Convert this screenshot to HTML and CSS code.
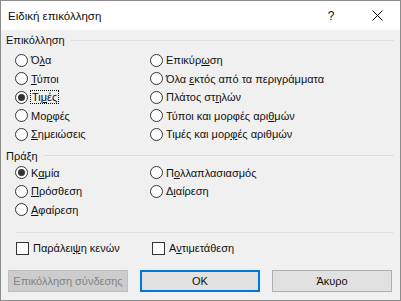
FILE: index.html
```html
<!DOCTYPE html>
<html lang="el">
<head>
    <meta charset="UTF-8">
    <title>Ειδική επικόλληση</title>
    <link rel="stylesheet" href="styles.css">
</head>
<body>
    <div class="dialog">
        <div class="titlebar">
            <span class="title">Ειδική επικόλληση</span>
            <span class="help">?</span>
            <span class="close">
                <svg width="11" height="11" viewBox="0 0 11 11"><path d="M0.5 0.5 L10.5 10.5 M10.5 0.5 L0.5 10.5" stroke="#000" stroke-width="1" fill="none"/></svg>
            </span>
        </div>

        <div class="content">
            <div class="group-head group-paste"><span>Επικόλληση</span></div>
            <div class="options options-paste">
                <label class="opt"><span class="radio"></span><span>Ό<u>λ</u>α</span></label>
                <label class="opt"><span class="radio"></span><span>Επικύρ<u>ω</u>ση</span></label>
                <label class="opt"><span class="radio"></span><span><u>Τ</u>ύποι</span></label>
                <label class="opt"><span class="radio"></span><span>Όλα <u>ε</u>κτός από τα περιγράμματα</span></label>
                <label class="opt"><span class="radio checked"></span><span class="focus">Τι<u>μ</u>ές</span></label>
                <label class="opt"><span class="radio"></span><span>Πλάτος στ<u>η</u>λών</span></label>
                <label class="opt"><span class="radio"></span><span>Μο<u>ρ</u>φές</span></label>
                <label class="opt"><span class="radio"></span><span>Τύποι και μορφές αρι<u>θ</u>μών</span></label>
                <label class="opt"><span class="radio"></span><span><u>Σ</u>ημειώσεις</span></label>
                <label class="opt"><span class="radio"></span><span>Τιμές και μορ<u>φ</u>ές αριθμών</span></label>
            </div>

            <div class="group-head group-op"><span>Πράξη</span></div>
            <div class="options options-op">
                <label class="opt"><span class="radio checked"></span><span>Κ<u>α</u>μία</span></label>
                <label class="opt"><span class="radio"></span><span>Π<u>ο</u>λλαπλασιασμός</span></label>
                <label class="opt"><span class="radio"></span><span><u>Π</u>ρόσθεση</span></label>
                <label class="opt"><span class="radio"></span><span>Δ<u>ι</u>αίρεση</span></label>
                <label class="opt"><span class="radio"></span><span><u>Α</u>φαίρεση</span></label>
            </div>

            <div class="separator"></div>

            <div class="options options-check">
                <label class="opt"><span class="check"></span><span>Παράλει<u>ψ</u>η κενών</span></label>
                <label class="opt"><span class="check"></span><span>Α<u>ν</u>τιμετάθεση</span></label>
            </div>

            <div class="buttons">
                <button class="btn" disabled>Επικόλληση σύνδεσης</button>
                <button class="btn btn-default">OK</button>
                <button class="btn">Άκυρο</button>
            </div>
        </div>
    </div>
</body>
</html>
```

FILE: styles.css
```css
* {
    margin: 0;
    padding: 0;
    box-sizing: border-box;
}

body {
    font-family: 'Liberation Sans', Arial, sans-serif;
    font-size: 11px;
    color: #111;
    background: #f0f0f0;
}

.dialog {
    width: 401px;
    height: 301px;
    border: 1px solid #8c8c8c;
    background: #f0f0f0;
    display: flex;
    flex-direction: column;
}

.titlebar {
    height: 29px;
    background: #fff;
    display: flex;
    align-items: center;
    padding-left: 7px;
}

.title {
    flex: 1;
    font-size: 11.5px;
}

.help {
    width: 46px;
    text-align: center;
    font-size: 12px;
}

.close {
    width: 46px;
    display: flex;
    justify-content: center;
}

.content {
    padding: 0 6px 0 5px;
    flex: 1;
    display: flex;
    flex-direction: column;
}

.group-head {
    display: flex;
    align-items: center;
    height: 16px;
    gap: 6px;
}

.group-head::after {
    content: "";
    flex: 1;
    border-top: 1px solid #dcdcdc;
}

.group-paste {
    margin-top: 2px;
}

.group-op {
    margin-top: 4px;
}

.options {
    display: grid;
    grid-template-columns: 135px 1fr;
    grid-auto-rows: 18.5px;
    padding-left: 9px;
}

.options-paste {
    margin-top: 3px;
}

.opt {
    display: flex;
    align-items: center;
    white-space: nowrap;
}

.opt u {
    text-decoration-thickness: 1px;
    text-underline-offset: 1px;
}

.radio {
    width: 13px;
    height: 13px;
    border: 1px solid #333;
    border-radius: 50%;
    background: #fff;
    margin-right: 3px;
    display: flex;
    align-items: center;
    justify-content: center;
    flex: none;
}

.radio.checked::after {
    content: "";
    width: 7px;
    height: 7px;
    border-radius: 50%;
    background: #333;
}

.focus {
    outline: 1px dotted #000;
    outline-offset: 0;
    padding: 0 1px;
}

.check {
    width: 13px;
    height: 13px;
    border: 1px solid #333;
    background: #fff;
    margin-right: 4px;
    flex: none;
}

.separator {
    margin: 13px 1px 0 10px;
    border-top: 1px solid #dcdcdc;
}

.options-check {
    margin-top: 6px;
    grid-auto-rows: 18px;
    padding-left: 10px;
    grid-template-columns: 136px 1fr;
}

.buttons {
    display: flex;
    gap: 12px;
    margin-top: 13px;
    padding-left: 2px;
}

.btn {
    width: 120px;
    height: 22px;
    font-family: inherit;
    font-size: 11px;
    background: #e1e1e1;
    border: 1px solid #adadad;
    color: #111;
    white-space: nowrap;
}

.btn:disabled {
    background: #cccccc;
    border-color: #bfbfbf;
    color: #838383;
}

.btn-default {
    border: 2px solid #0078d7;
}
```
